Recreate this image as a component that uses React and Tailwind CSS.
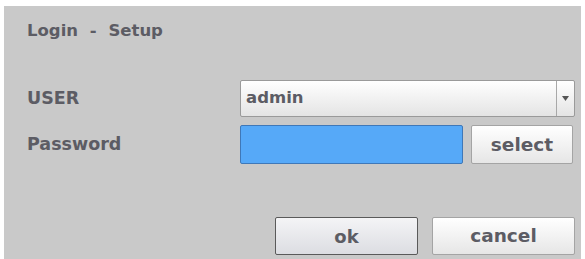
import React from 'react';

const font = { fontFamily: '"DejaVu Sans", "Liberation Sans", sans-serif' };

function Label({ children }) {
  return <div className="w-[213px] text-[17.5px] font-bold text-[#5c5c64]">{children}</div>;
}

export default function App() {
  return (
    <div className="h-[259px] w-[585px] bg-white pl-[4px] pt-[6px]" style={font}>
      <div className="flex h-[253px] w-[577px] flex-col bg-[#c9c9c9] pl-[23px] pr-[6px] pt-[12px]">
        <div className="h-[26px] text-[16.5px] font-bold leading-[26px] text-[#5c5c64]">
          Login <span className="mx-[6px]">-</span> Setup
        </div>

        <div className="mt-[36px] flex h-[37px] items-center">
          <Label>USER</Label>
          <div className="flex h-[37px] w-[335px] rounded-[2px] border border-[#9a9a9a] bg-gradient-to-b from-white to-[#e4e4e4]">
            <div className="flex flex-1 items-center pl-[5px] text-[16.5px] font-bold text-[#5c5c64]">admin</div>
            <div className="flex w-[18px] items-center justify-center border-l border-[#a8a8a8]">
              <svg width="7" height="5" viewBox="0 0 7 5">
                <path d="M0 0 L7 0 L3.5 5 Z" fill="#555" />
              </svg>
            </div>
          </div>
        </div>

        <div className="mt-[8px] flex h-[39px] items-center">
          <Label>Password</Label>
          <div className="h-[39px] w-[223px] rounded-[2px] border border-[#3f78b8] bg-[#56a9f8]" />
          <button className="ml-[8px] h-[39px] w-[102px] rounded-[2px] border border-[#a4a4a4] bg-gradient-to-b from-white to-[#e6e6e6] text-[18.5px] font-bold text-[#5c5c64]">
            select
          </button>
        </div>

        <div className="mt-[53px] flex justify-end gap-[14px]">
          <button className="h-[38px] w-[143px] rounded-[2px] border border-[#5a5a5a] bg-gradient-to-b from-[#f4f4f6] to-[#dcdde2] text-[18px] font-bold text-[#5c5c64]">
            ok
          </button>
          <button className="h-[38px] w-[143px] rounded-[2px] border border-[#a4a4a4] bg-gradient-to-b from-white to-[#e6e6e6] text-[18.5px] font-bold text-[#5c5c64]">
            cancel
          </button>
        </div>
      </div>
    </div>
  );
}
